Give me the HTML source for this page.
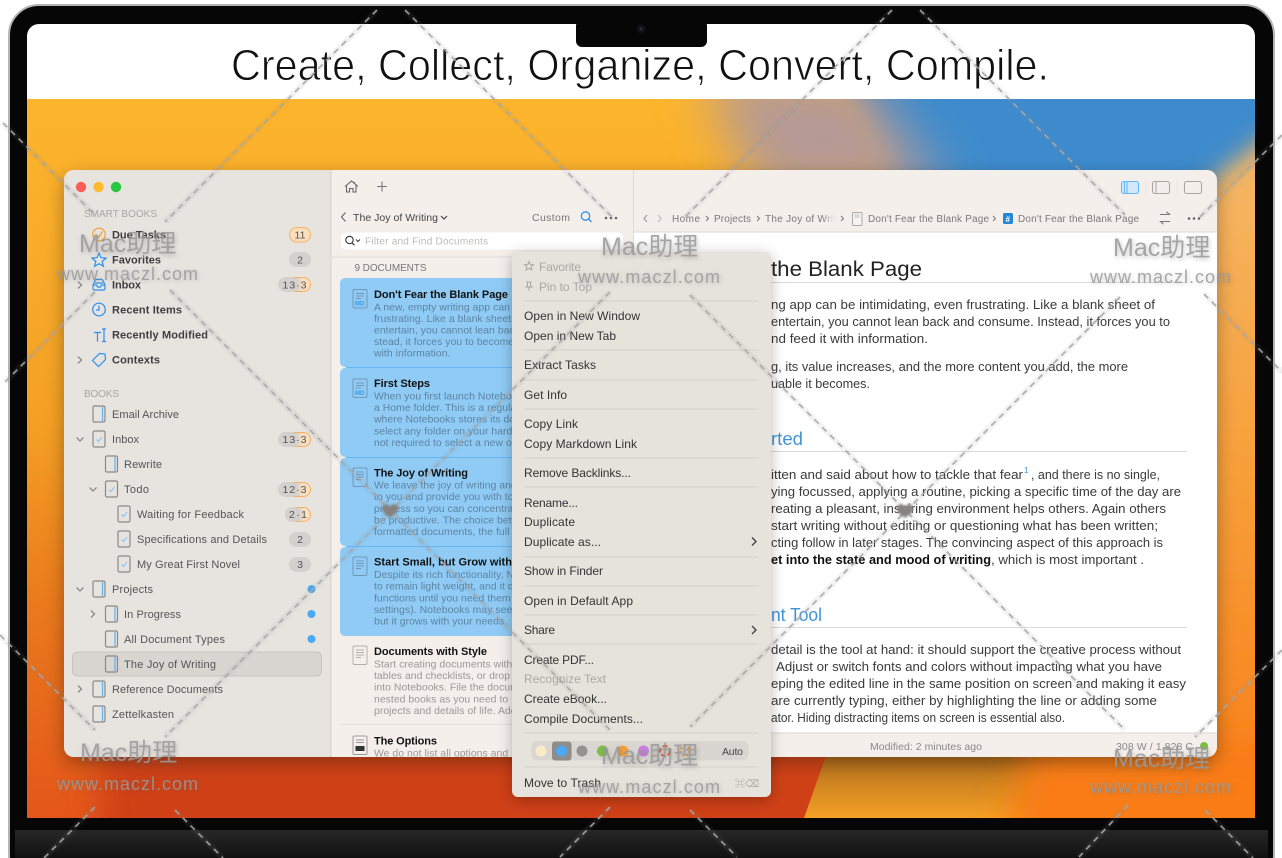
<!DOCTYPE html>
<html><head><meta charset="utf-8"><title>Notebooks</title>
<style>
html,body{margin:0;padding:0;background:#fff;width:1282px;height:858px;overflow:hidden}
svg{display:block;position:absolute;left:0;top:0}
text{font-family:"Liberation Sans","Noto Sans CJK SC",sans-serif;white-space:pre}
.sb{font-size:11px;font-weight:700;fill:#3e3e3e}
.sr{font-size:11px;fill:#555}
.sh{font-size:10px;font-weight:400;fill:#a9a6a3}
.bd{font-size:10.5px;fill:#555;text-anchor:middle}
.ct{font-size:11px;font-weight:700;fill:#111}
.cd{font-size:10.4px;fill:#5c84a3;letter-spacing:.05px}
.cg{font-size:10.4px;fill:#9a9794;letter-spacing:.05px}
.m{font-size:12px;fill:#333}
.md{font-size:12px;fill:#aaa8a5}
.bc{font-size:10px;fill:#7b7977}
.e{font-size:12.6px;fill:#3a3a3a}
.wm1{font-size:25px;fill:#9a9a9a;fill-opacity:.85;filter:drop-shadow(1px 2px 2px rgba(90,90,90,.4))}
.wm2{font-size:18px;fill:#9a9a9a;fill-opacity:.85;filter:drop-shadow(1px 1px 2px rgba(90,90,90,.35))}
.dash{fill:none;stroke:#a6a6a6;stroke-width:1.7;stroke-dasharray:6 5;stroke-opacity:.9}
.glow{fill:none;stroke:#8a8a8a;stroke-opacity:.1;stroke-width:6}
.bk{fill:none;stroke:#8b8987;stroke-width:1.2}
.bl{stroke:#62b4f4;stroke-width:1.3}
.ck{fill:none;stroke:#7cc0f5;stroke-width:1}
.ch{fill:none;stroke:#8c8a88;stroke-width:1.3}
.ic{fill:none;stroke:#2a90f0;stroke-width:1.2}
.sep{stroke:#d4d0cb;stroke-width:1}
.ln{stroke:#7397b5;stroke-width:1;fill:none}
</style></head>
<body>
<svg width="1282" height="858" viewBox="0 0 1282 858" xmlns="http://www.w3.org/2000/svg">
<defs>
<linearGradient id="base" x1="0" y1="0" x2="0" y2="1">
<stop offset="0" stop-color="#fdb52d"/><stop offset=".45" stop-color="#f4a024"/><stop offset=".7" stop-color="#ea7a1c"/><stop offset="1" stop-color="#e4561a"/>
</linearGradient>
<linearGradient id="rightg" x1="0" y1="0" x2="0" y2="1">
<stop offset="0" stop-color="#f6b868"/><stop offset=".45" stop-color="#f7a03a"/><stop offset="1" stop-color="#f97a15"/>
</linearGradient>
<linearGradient id="amb" x1="0" y1="0" x2="0" y2="1">
<stop offset="0" stop-color="#a9661d"/><stop offset=".45" stop-color="#cc821f"/><stop offset="1" stop-color="#f5a025"/>
</linearGradient>
<linearGradient id="base2" x1="0" y1="0" x2="0" y2="1">
<stop offset="0" stop-color="#272727"/><stop offset="1" stop-color="#111"/>
</linearGradient>
<linearGradient id="bdg" x1="0" y1="0" x2="1" y2="0">
<stop offset="0" stop-color="#d3d0cd"/><stop offset=".55" stop-color="#d3d0cd"/><stop offset=".75" stop-color="#f9dfc0"/><stop offset="1" stop-color="#f9dfc0"/>
</linearGradient>
<filter id="b30" x="-30%" y="-30%" width="160%" height="160%"><feGaussianBlur stdDeviation="26"/></filter>
<filter id="b10" x="-30%" y="-30%" width="160%" height="160%"><feGaussianBlur stdDeviation="12"/></filter>
<filter id="b20" x="-30%" y="-50%" width="160%" height="200%"><feGaussianBlur stdDeviation="18"/></filter>
<filter id="ws" x="-10%" y="-10%" width="120%" height="125%"><feDropShadow dx="0" dy="6" stdDeviation="9" flood-color="#000" flood-opacity=".33"/></filter>
<filter id="ms" x="-20%" y="-10%" width="140%" height="120%"><feDropShadow dx="0" dy="3" stdDeviation="7" flood-color="#000" flood-opacity=".28"/></filter>
<filter id="h" x="-50%" y="-50%" width="200%" height="200%"><feGaussianBlur stdDeviation="1.200"/></filter>
<clipPath id="scr"><path d="M27 36a12 12 0 0 1 12-12H1243a12 12 0 0 1 12 12V818H27z"/></clipPath>
<clipPath id="wp"><rect x="27" y="99" width="1228" height="719"/></clipPath>
<clipPath id="win"><rect x="64" y="170" width="1153" height="587" rx="10"/></clipPath>
<clipPath id="fade"><rect x="760" y="205" width="76" height="26"/></clipPath>
<linearGradient id="fd" x1="0" y1="0" x2="1" y2="0"><stop offset="0" stop-color="#f5efec" stop-opacity="0"/><stop offset="1" stop-color="#f5efec"/></linearGradient>
</defs>

<!-- device -->
<rect x="9" y="5" width="1265" height="880" rx="30" fill="#060606" stroke="#b4b4b4" stroke-width="2"/>
<rect x="15" y="830" width="1253" height="28" fill="url(#base2)"/>
<g clip-path="url(#scr)">
<rect x="27" y="24" width="1228" height="76" fill="#fff"/>
<g clip-path="url(#wp)">
<rect x="27" y="99" width="1228" height="719" fill="url(#base)"/>
<polygon points="1190,170 1255,130 1290,130 1290,860 1000,860 1000,500" fill="url(#rightg)" filter="url(#b10)"/>
<polygon points="830,50 1320,50 1320,95 1200,190 930,260" fill="#3e8bcd" filter="url(#b10)"/>
<polygon points="700,70 860,70 950,200 760,200" fill="#b59a94" filter="url(#b30)"/>
<polygon points="100,745 900,745 900,860 100,860" fill="#cf4016" filter="url(#b20)"/>
<polygon points="828,750 1160,750 1160,818 804,818" fill="url(#amb)"/>
<polygon points="1030,740 1300,740 1300,860 1000,860" fill="#f97c16" filter="url(#b20)"/>
</g>
</g>
<rect x="576" y="20" width="131" height="27" rx="6" fill="#060606"/>
<circle cx="641" cy="29" r="4" fill="#12161c"/><circle cx="641" cy="29" r="1" fill="#2b3a4d"/>
<text x="231" y="80" font-size="44" textLength="818" lengthAdjust="spacingAndGlyphs" fill="#111" stroke="#fff" stroke-width=".9">Create, Collect, Organize, Convert, Compile.</text>

<!-- window -->
<rect x="64" y="170" width="1153" height="587" rx="10" fill="#f5efec" filter="url(#ws)"/>
<g clip-path="url(#win)">
<rect x="64" y="170" width="267" height="587" fill="#e7e3df"/>
<line x1="331" y1="170" x2="331" y2="757" stroke="#d5d1cd"/>
<rect x="332" y="170" width="302" height="587" fill="#f5efec"/>
<line x1="633.500" y1="170" x2="633.500" y2="757" stroke="#dfd9d5"/>
<rect x="634" y="232" width="583" height="501" fill="#fff"/>
<line x1="634" y1="232" x2="1217" y2="232" stroke="#dcd8d5"/>
<line x1="634" y1="733" x2="1217" y2="733" stroke="#dcd8d5"/>
<line x1="332" y1="257" x2="633" y2="257" stroke="#e2dcd8"/>

<circle cx="81" cy="187" r="5.200" fill="#fb5f57"/><circle cx="98.500" cy="187" r="5.200" fill="#fdbc2e"/><circle cx="116" cy="187" r="5.200" fill="#28c840"/>

<!-- sidebar -->
<text class="sh" x="84" y="217" textLength="73">SMART BOOKS</text>
<text class="sb" x="112" y="238.500" textLength="54">Due Tasks</text>
<text class="sb" x="112" y="263.500" textLength="49">Favorites</text>
<text class="sb" x="112" y="288.500" textLength="29">Inbox</text>
<text class="sb" x="112" y="313.500" textLength="70">Recent Items</text>
<text class="sb" x="112" y="338.500" textLength="96">Recently Modified</text>
<text class="sb" x="112" y="363.500" textLength="48">Contexts</text>
<text class="sh" x="84" y="397" textLength="35">BOOKS</text>
<text class="sr" x="112" y="418" textLength="67">Email Archive</text>
<text class="sr" x="112" y="443" textLength="27">Inbox</text>
<text class="sr" x="124" y="468" textLength="38">Rewrite</text>
<text class="sr" x="124" y="493" textLength="25">Todo</text>
<text class="sr" x="137" y="518" textLength="107">Waiting for Feedback</text>
<text class="sr" x="137" y="543" textLength="130">Specifications and Details</text>
<text class="sr" x="137" y="568" textLength="103">My Great First Novel</text>
<text class="sr" x="112" y="593" textLength="41">Projects</text>
<text class="sr" x="124" y="618" textLength="57">In Progress</text>
<text class="sr" x="124" y="643" textLength="101">All Document Types</text>
<rect x="72.500" y="652" width="249" height="24" rx="5" fill="#d9d5d1" stroke="#c8c4c0"/>
<text class="sr" x="124" y="668" textLength="92">The Joy of Writing</text>
<text class="sr" x="112" y="693" textLength="111">Reference Documents</text>
<text class="sr" x="112" y="718" textLength="62">Zettelkasten</text>

<!-- smart icons -->
<circle cx="99" cy="234.500" r="6.300" fill="none" stroke="#f2a033" stroke-width="1.2"/><path d="M96 235l2.500 2.500 4-6" fill="none" stroke="#f2a033" stroke-width="1.200"/>
<path class="ic" d="M99 253l2 4.600 5 .5-3.800 3.300 1.200 4.900-4.400-2.600-4.400 2.600 1.200-4.900-3.800-3.300 5-.5z"/>
<path class="ic" d="M93 285v3.500a1.500 1.500 0 0 0 1.500 1.500h9a1.500 1.500 0 0 0 1.500-1.500V285l-2-4.500a2 2 0 0 0-1.500-1h-5a2 2 0 0 0-1.500 1zM93 285h3.500l1 2h3l1-2H105M95 283h8"/>
<circle class="ic" cx="99" cy="309.500" r="6.300"/><path class="ic" d="M99 305.500v4.500h-3"/>
<path class="ic" d="M94 332.500h7M97.500 332.500v9M102 329h4M102 341.500h4M104 329v12.500" stroke-width="1.300"/>
<path class="ic" d="M99.500 353.500l5.500.5.500 5.500-7 7-6-6zM102.500 356.300h.1"/>
<!-- chevrons -->
<path class="ch" d="M78 281.500l3.500 3.500-3.500 3.500M78 356.500l3.500 3.500-3.500 3.500M78 685.500l3.500 3.500-3.500 3.500M91 610.500l3.500 3.500-3.500 3.500"/>
<path class="ch" d="M76.500 437.500l3.500 3.500 3.500-3.500M89.500 487.500l3.500 3.500 3.500-3.500M76.500 587.500l3.500 3.500 3.500-3.500"/>
<!-- book icons -->
<g>
<rect class="bk" x="93" y="406" width="12" height="16" rx="1.500"/><line class="bl" x1="102.500" y1="407" x2="102.500" y2="421"/>
<rect class="bk" x="93" y="431" width="12" height="16" rx="1.500"/><path class="ck" d="M96.500 439.500l2 2 3.500-4.500"/>
<rect class="bk" x="105.500" y="456" width="12" height="16" rx="1.500"/><line class="bl" x1="115" y1="457" x2="115" y2="471"/>
<rect class="bk" x="105.500" y="481" width="12" height="16" rx="1.500"/><path class="ck" d="M109 489.500l2 2 3.500-4.500"/>
<rect class="bk" x="118" y="506" width="12" height="16" rx="1.500"/><path class="ck" d="M121.500 514.500l2 2 3.500-4.500"/>
<rect class="bk" x="118" y="531" width="12" height="16" rx="1.500"/><path class="ck" d="M121.500 539.500l2 2 3.500-4.500"/>
<rect class="bk" x="118" y="556" width="12" height="16" rx="1.500"/><path class="ck" d="M121.500 564.500l2 2 3.500-4.500"/>
<rect class="bk" x="93" y="581" width="12" height="16" rx="1.500"/><line class="bl" x1="102.500" y1="582" x2="102.500" y2="596"/>
<rect class="bk" x="105.500" y="606" width="12" height="16" rx="1.500"/><line class="bl" x1="115" y1="607" x2="115" y2="621"/>
<rect class="bk" x="105.500" y="631" width="12" height="16" rx="1.500"/><line class="bl" x1="115" y1="632" x2="115" y2="646"/>
<rect class="bk" x="105.500" y="656" width="12" height="16" rx="1.500"/><line class="bl" x1="115" y1="657" x2="115" y2="671"/>
<rect class="bk" x="93" y="681" width="12" height="16" rx="1.500"/><line class="bl" x1="102.500" y1="682" x2="102.500" y2="696"/>
<rect class="bk" x="93" y="706" width="12" height="16" rx="1.500"/><line class="bl" x1="102.500" y1="707" x2="102.500" y2="721"/>
</g>
<!-- badges -->
<rect x="289.500" y="227.500" width="21" height="14.500" rx="7.200" fill="#f9dfc0" stroke="#f5b262"/><text class="bd" x="300" y="238.500">11</text>
<rect x="289" y="252" width="22" height="15" rx="7.500" fill="#d3d0cd"/><text class="bd" x="300" y="263.500">2</text>
<rect x="278" y="277" width="33" height="15" rx="7.500" fill="url(#bdg)"/><path d="M294 277.500h9.500a7 7 0 0 1 0 14H294" fill="none" stroke="#f5b262"/><text class="bd" x="294.500" y="288.500" textLength="24">13·3</text>
<rect x="278" y="432" width="33" height="15" rx="7.500" fill="url(#bdg)"/><path d="M294 432.500h9.500a7 7 0 0 1 0 14H294" fill="none" stroke="#f5b262"/><text class="bd" x="294.500" y="443" textLength="24">13·3</text>
<rect x="278" y="482" width="33" height="15" rx="7.500" fill="url(#bdg)"/><path d="M294 482.500h9.500a7 7 0 0 1 0 14H294" fill="none" stroke="#f5b262"/><text class="bd" x="294.500" y="493" textLength="24">12·3</text>
<rect x="285" y="507" width="26" height="15" rx="7.500" fill="url(#bdg)"/><path d="M296 507.500h7.500a7 7 0 0 1 0 14H296" fill="none" stroke="#f5b262"/><text class="bd" x="298" y="518" textLength="18">2·1</text>
<rect x="289" y="532" width="22" height="15" rx="7.500" fill="#d3d0cd"/><text class="bd" x="300" y="543">2</text>
<rect x="289" y="557" width="22" height="15" rx="7.500" fill="#d3d0cd"/><text class="bd" x="300" y="568">3</text>
<circle cx="311.500" cy="589" r="4" fill="#4aaaf5"/><circle cx="311.500" cy="614" r="4" fill="#4aaaf5"/><circle cx="311.500" cy="639" r="4" fill="#4aaaf5"/>

<!-- list toolbar -->
<path d="M345 186.500l6.500-5.500 6.500 5.500M346.500 185.500v6.500h3v-3.500h3.500v3.500h3v-6.500M354.500 182v1.500" fill="none" stroke="#666" stroke-width="1.100"/>
<path d="M382 181.500v10M377 186.500h10" fill="none" stroke="#777" stroke-width="1.100"/>
<path d="M345.500 212.500l-4 4.500 4 4.500" fill="none" stroke="#666" stroke-width="1.100"/>
<text x="353" y="221" font-size="10.500" fill="#444" textLength="85">The Joy of Writing</text>
<path d="M441 216l3 3 3-3" fill="none" stroke="#444" stroke-width="1.200"/>
<text x="532" y="221" font-size="10.500" fill="#777" textLength="38">Custom</text>
<circle cx="585.500" cy="216" r="4.200" fill="none" stroke="#2a90f0" stroke-width="1.300"/><path d="M588.500 219l3 3" stroke="#2a90f0" stroke-width="1.300"/>
<circle cx="606" cy="218" r="1.300" fill="#666"/><circle cx="611" cy="218" r="1.300" fill="#666"/><circle cx="616" cy="218" r="1.300" fill="#666"/>
<rect x="341" y="232.500" width="282" height="17" rx="5" fill="#fff"/>
<circle cx="349.500" cy="240" r="3.700" fill="none" stroke="#333" stroke-width="1.100"/><path d="M352 242.800l2.500 2.500" stroke="#333" stroke-width="1.100"/><path d="M356 239.500l2 2 2-2" fill="none" stroke="#333"/>
<text x="365" y="244.500" font-size="10" fill="#bdbbb9" textLength="123">Filter and Find Documents</text>
<text x="354.500" y="271" font-size="10" fill="#777" textLength="72">9 DOCUMENTS</text>

<!-- cards -->
<rect x="340" y="278" width="200" height="89" rx="5" fill="#8fcbf5"/>
<rect x="340" y="368" width="200" height="89" rx="5" fill="#8fcbf5"/>
<rect x="340" y="458" width="200" height="88" rx="5" fill="#8fcbf5"/>
<rect x="340" y="547" width="200" height="89" rx="5" fill="#8fcbf5"/>
<line x1="346" y1="367.500" x2="540" y2="367.500" stroke="#66b6f5"/><line x1="346" y1="457.500" x2="540" y2="457.500" stroke="#66b6f5"/><line x1="346" y1="546.500" x2="540" y2="546.500" stroke="#66b6f5"/>
<line x1="340" y1="724.500" x2="540" y2="724.500" stroke="#e4dfdb"/>

<g class="ln">
<rect x="353" y="289.500" width="14" height="18.500" rx="1.500"/><path d="M356 293.500h8M356 296h8M356 298.500h5"/>
<rect x="353" y="379" width="14" height="18.500" rx="1.500"/><path d="M356 383h8M356 385.500h8M356 388h5"/>
<rect x="353" y="468" width="14" height="18.500" rx="1.500"/><path d="M356 472h8M356 474.500h8M356 477h8M356 479.500h5"/>
<rect x="353" y="557" width="14" height="18.500" rx="1.500"/><path d="M356 561h8M356 563.500h8M356 566h8M356 568.500h5"/>
<rect x="353" y="646" width="14" height="18.500" rx="1.500" stroke="#b3b0ad"/><path d="M356 650h8M356 652.500h8M356 655h8M356 657.500h5" stroke="#b3b0ad"/>
<rect x="353" y="736" width="14" height="18.500" rx="1.500" stroke="#999"/><path d="M356 740h8M356 742.500h8" stroke="#999"/>
</g>
<rect x="355.500" y="746" width="9" height="5" fill="#333"/>
<text x="355" y="305.500" font-size="6" font-weight="700" fill="#3a9cec">MD</text>
<text x="355" y="395" font-size="6" font-weight="700" fill="#3a9cec">MD</text>

<text class="ct" x="374" y="298" textLength="134">Don't Fear the Blank Page</text>
<text class="cd" x="374" y="310.500">A new, empty writing app can be intimidating</text>
<text class="cd" x="374" y="322">frustrating. Like a blank sheet of paper</text>
<text class="cd" x="374" y="333.500">entertain, you cannot lean back and consume</text>
<text class="cd" x="374" y="345">stead, it forces you to become active</text>
<text class="cd" x="374" y="356.500">with information.</text>

<text class="ct" x="374" y="387" textLength="56">First Steps</text>
<text class="cd" x="374" y="399.300">When you first launch Notebooks it creates</text>
<text class="cd" x="374" y="411">a Home folder. This is a regular folder</text>
<text class="cd" x="374" y="422.600">where Notebooks stores its documents</text>
<text class="cd" x="374" y="434.300">select any folder on your hard drive</text>
<text class="cd" x="374" y="446">not required to select a new one</text>

<text class="ct" x="374" y="476.500" textLength="94">The Joy of Writing</text>
<text class="cd" x="374" y="488.600">We leave the joy of writing and editing</text>
<text class="cd" x="374" y="500.200">to you and provide you with tools</text>
<text class="cd" x="374" y="511.800">process so you can concentrate</text>
<text class="cd" x="374" y="523.500">be productive. The choice between</text>
<text class="cd" x="374" y="535.200">formatted documents, the full</text>

<text class="ct" x="374" y="565.500" textLength="138">Start Small, but Grow with</text>
<text class="cd" x="374" y="578">Despite its rich functionality, Notebooks</text>
<text class="cd" x="374" y="589.600">to remain light weight, and it does</text>
<text class="cd" x="374" y="601.300">functions until you need them</text>
<text class="cd" x="374" y="613">settings). Notebooks may seem</text>
<text class="cd" x="374" y="624.700">but it grows with your needs.</text>

<text class="ct" x="374" y="655" textLength="113">Documents with Style</text>
<text class="cg" x="374" y="667.300">Start creating documents with</text>
<text class="cg" x="374" y="679">tables and checklists, or drop</text>
<text class="cg" x="374" y="690.600">into Notebooks. File the documents</text>
<text class="cg" x="374" y="702.300">nested books as you need to</text>
<text class="cg" x="374" y="714">projects and details of life. Add</text>

<text class="ct" x="374" y="744.500" textLength="63">The Options</text>
<text class="cg" x="374" y="756.300">We do not list all options and</text>

<!-- editor toolbar -->
<rect x="1121.500" y="181.500" width="17" height="12" rx="2" fill="#d3e9fb" stroke="#62b8f6" stroke-width="1.100"/><path d="M1124.500 182v11M1127 182v11" stroke="#62b8f6"/>
<rect x="1152.500" y="181.500" width="17" height="12" rx="2" fill="none" stroke="#aaa7a4" stroke-width="1.100"/><path d="M1156 182v11" stroke="#aaa7a4"/>
<rect x="1184.500" y="181.500" width="17" height="12" rx="2" fill="none" stroke="#aaa7a4" stroke-width="1.100"/>
<path d="M1146 180v14M1177 180v14" stroke="#ebe6e2"/>
<path d="M647 215l-3 3.500 3 3.500" fill="none" stroke="#999" stroke-width="1.100"/><path d="M658 215l3 3.500-3 3.500" fill="none" stroke="#bbb" stroke-width="1.100"/>
<text class="bc" x="672" y="222" textLength="28">Home</text>
<text class="bc" x="714" y="222" textLength="37">Projects</text>
<text class="bc" x="765" y="222" clip-path="url(#fade)" textLength="71">The Joy of Writ</text>
<rect x="822" y="210" width="14" height="16" fill="url(#fd)"/>
<path d="M706 216l2.500 2.500-2.500 2.500M757 216l2.500 2.500-2.500 2.500M841 216l2.500 2.500-2.500 2.500M993 216l2.500 2.500-2.500 2.500" fill="none" stroke="#777"/>
<rect x="852.500" y="212.500" width="9.500" height="13" rx="1" fill="#f7f3f0" stroke="#aaa"/><path d="M854.500 215h5M854.500 217h5" stroke="#aaa" stroke-width=".7"/>
<text class="bc" x="868" y="222" textLength="121">Don't Fear the Blank Page</text>
<rect x="1003" y="213" width="10" height="11" rx="1.500" fill="#2488d8"/><text x="1005.500" y="222" font-size="8" font-weight="700" fill="#fff">#</text>
<text class="bc" x="1018" y="222" textLength="121">Don't Fear the Blank Page</text>
<path d="M1160 214.500h9.500l-3-2.700M1170 221.500h-9.500l3 2.700" fill="none" stroke="#777" stroke-width="1.100"/>
<circle cx="1189" cy="218.500" r="1.300" fill="#666"/><circle cx="1194" cy="218.500" r="1.300" fill="#666"/><circle cx="1199" cy="218.500" r="1.300" fill="#666"/>

<!-- editor text -->
<text x="771" y="276" font-size="21" fill="#222" textLength="151" lengthAdjust="spacingAndGlyphs">the Blank Page</text>
<line x1="771" y1="282.500" x2="1187" y2="282.500" stroke="#dcdad8"/>
<text class="e" x="771" y="309" textLength="384" lengthAdjust="spacingAndGlyphs">ng app can be intimidating, even frustrating. Like a blank sheet of</text>
<text class="e" x="771" y="326" textLength="399" lengthAdjust="spacingAndGlyphs">entertain, you cannot lean back and consume. Instead, it forces you to</text>
<text class="e" x="771" y="343" textLength="157" lengthAdjust="spacingAndGlyphs">nd feed it with information.</text>
<text class="e" x="771" y="371" textLength="357" lengthAdjust="spacingAndGlyphs">g, its value increases, and the more content you add, the more</text>
<text class="e" x="771" y="388" textLength="99" lengthAdjust="spacingAndGlyphs">uable it becomes.</text>
<text x="771" y="445" font-size="18" fill="#3f94d6" textLength="32" lengthAdjust="spacingAndGlyphs">rted</text>
<line x1="771" y1="451.500" x2="1187" y2="451.500" stroke="#dcdad8"/>
<text class="e" x="771" y="479" textLength="252" lengthAdjust="spacingAndGlyphs">itten and said about how to tackle that fear</text>
<text x="1024" y="473" font-size="8" fill="#3f94d6">1</text>
<text class="e" x="1031" y="479" textLength="129" lengthAdjust="spacingAndGlyphs">, and there is no single,</text>
<text class="e" x="771" y="496" textLength="410" lengthAdjust="spacingAndGlyphs">ying focussed, applying a routine, picking a specific time of the day are</text>
<text class="e" x="771" y="513" textLength="395" lengthAdjust="spacingAndGlyphs">reating a pleasant, inspiring environment helps others. Again others</text>
<text class="e" x="771" y="530" textLength="387" lengthAdjust="spacingAndGlyphs">start writing without editing or questioning what has been written;</text>
<text class="e" x="771" y="547" textLength="392" lengthAdjust="spacingAndGlyphs">cting follow in later stages. The convincing aspect of this approach is</text>
<text class="e" x="771" y="564" font-weight="700" style="fill:#111" textLength="220" lengthAdjust="spacingAndGlyphs">et into the state and mood of writing</text>
<text class="e" x="991" y="564" textLength="153" lengthAdjust="spacingAndGlyphs">, which is most important .</text>
<text x="771" y="621" font-size="18" fill="#3f94d6" textLength="51" lengthAdjust="spacingAndGlyphs">nt Tool</text>
<line x1="771" y1="627.500" x2="1187" y2="627.500" stroke="#dcdad8"/>
<text class="e" x="771" y="654" textLength="410" lengthAdjust="spacingAndGlyphs">detail is the tool at hand: it should support the creative process without</text>
<text class="e" x="776" y="671" textLength="386" lengthAdjust="spacingAndGlyphs">Adjust or switch fonts and colors without impacting what you have</text>
<text class="e" x="771" y="688" textLength="415" lengthAdjust="spacingAndGlyphs">eping the edited line in the same position on screen and making it easy</text>
<text class="e" x="771" y="705" textLength="386" lengthAdjust="spacingAndGlyphs">are currently typing, either by highlighting the line or adding some</text>
<text class="e" x="771" y="722" textLength="294" lengthAdjust="spacingAndGlyphs">ator. Hiding distracting items on screen is essential also.</text>
<text x="870" y="750" font-size="10.500" fill="#888" textLength="112">Modified: 2 minutes ago</text>
<text x="1116" y="750" font-size="10.500" fill="#888" textLength="77">308 W / 1,828 C</text>
<circle cx="1204" cy="746" r="4" fill="#7cc043"/>
</g>

<!-- context menu -->
<rect x="512" y="252" width="259" height="545" rx="6" fill="#e6e2dc" filter="url(#ms)"/>
<path d="M529 261.500l1.300 3 3.200.3-2.400 2.100.7 3.100-2.800-1.700-2.800 1.700.7-3.100-2.400-2.100 3.200-.3z" fill="none" stroke="#aaa8a5"/>
<path d="M526.500 282h5M527.500 282v3.500l-1.500 1.500h6l-1.500-1.500V282M529 287v4" fill="none" stroke="#aaa8a5"/>
<text class="md" x="539" y="271" textLength="42">Favorite</text>
<text class="md" x="539" y="291" textLength="53">Pin to Top</text>
<line class="sep" x1="524" y1="301" x2="758" y2="301"/>
<text class="m" x="524" y="320" textLength="116">Open in New Window</text>
<text class="m" x="524" y="340" textLength="92">Open in New Tab</text>
<line class="sep" x1="524" y1="350" x2="758" y2="350"/>
<text class="m" x="524" y="369" textLength="72">Extract Tasks</text>
<line class="sep" x1="524" y1="380" x2="758" y2="380"/>
<text class="m" x="524" y="399" textLength="43">Get Info</text>
<line class="sep" x1="524" y1="409" x2="758" y2="409"/>
<text class="m" x="524" y="428" textLength="54">Copy Link</text>
<text class="m" x="524" y="448" textLength="113">Copy Markdown Link</text>
<line class="sep" x1="524" y1="458" x2="758" y2="458"/>
<text class="m" x="524" y="477" textLength="107">Remove Backlinks...</text>
<line class="sep" x1="524" y1="487" x2="758" y2="487"/>
<text class="m" x="524" y="507" textLength="54">Rename...</text>
<text class="m" x="524" y="526" textLength="51">Duplicate</text>
<text class="m" x="524" y="546" textLength="77">Duplicate as...</text>
<path d="M752 537.500l4 4-4 4M752 626l4 4-4 4" fill="none" stroke="#444" stroke-width="1.400"/>
<line class="sep" x1="524" y1="557" x2="758" y2="557"/>
<text class="m" x="524" y="575" textLength="79">Show in Finder</text>
<line class="sep" x1="524" y1="586" x2="758" y2="586"/>
<text class="m" x="524" y="605" textLength="109">Open in Default App</text>
<line class="sep" x1="524" y1="615" x2="758" y2="615"/>
<text class="m" x="524" y="634" textLength="31">Share</text>
<line class="sep" x1="524" y1="644" x2="758" y2="644"/>
<text class="m" x="524" y="664" textLength="70">Create PDF...</text>
<text class="md" x="524" y="683" textLength="82">Recognize Text</text>
<text class="m" x="524" y="703" textLength="83">Create eBook...</text>
<text class="m" x="524" y="723" textLength="119">Compile Documents...</text>
<line class="sep" x1="524" y1="733" x2="758" y2="733"/>
<rect x="531.500" y="741" width="217" height="19.500" rx="6" fill="#d9d5d0"/>
<rect x="552" y="741.500" width="19.500" height="19" rx="3" fill="#8f8c89"/>
<circle cx="541" cy="751" r="5.500" fill="#f8ecc8"/><circle cx="561.500" cy="751" r="5.500" fill="#4aa9f5"/><circle cx="582" cy="751" r="5.500" fill="#95928f"/>
<circle cx="602.500" cy="751" r="5.500" fill="#7cc043"/><circle cx="623" cy="751" r="5.500" fill="#f5a03c"/><circle cx="643.500" cy="751" r="5.500" fill="#c77fe0"/>
<circle cx="665" cy="751" r="5" fill="none" stroke="#e5583c" stroke-width="2" stroke-dasharray="5 2"/>
<circle cx="685" cy="751" r="4.500" fill="none" stroke="#eda040" stroke-width="2.500" stroke-dasharray="2 2"/>
<text x="722" y="755" font-size="10.500" fill="#444" textLength="21">Auto</text>
<line class="sep" x1="524" y1="767" x2="758" y2="767"/>
<text class="m" x="524" y="787" textLength="77">Move to Trash</text>
<text x="735" y="787" font-size="10" fill="#aaa8a5">⌘⌫</text>

<!-- watermark lattice -->
<g class="glow">
<path d="M377 10L165 222M95 292L5 382M892 10L685 217M610 292L165 737M95 807L44 858M1282 135L1200 217M1120 297L690 727M610 807L560 857M1282 650L1195 737M1128 805L1079 857M3 123L95 215M170 290L610 730M690 810L737 857M405 10L612 217M690 295L1125 730M1205 810L1253 858M920 10L1125 215M1204 294L1282 372M0 635L95 730M175 810L223 858"/>
</g>
<g class="dash">
<path d="M377 10L165 222M95 292L5 382M892 10L685 217M610 292L165 737M95 807L44 858M1282 135L1200 217M1120 297L690 727M610 807L560 857M1282 650L1195 737M1128 805L1079 857M3 123L95 215M170 290L610 730M690 810L737 857M405 10L612 217M690 295L1125 730M1205 810L1253 858M920 10L1125 215M1204 294L1282 372M0 635L95 730M175 810L223 858"/>
</g>
<path d="M390 518c-5-3.500-8-6-8-9a4 4 0 0 1 8-1.500a4 4 0 0 1 8 1.500c0 3-3 5.500-8 9z" fill="#85827f" filter="url(#h)"/>
<path d="M905 518c-5-3.500-8-6-8-9a4 4 0 0 1 8-1.500a4 4 0 0 1 8 1.500c0 3-3 5.500-8 9z" fill="#85827f" filter="url(#h)"/>

<text class="wm1" x="79" y="252">Mac助理</text>
<text class="wm2" x="57" y="280" textLength="141">www.maczl.com</text>
<text class="wm1" x="601" y="255">Mac助理</text>
<text class="wm2" x="578" y="283" textLength="142">www.maczl.com</text>
<text class="wm1" x="1113" y="256">Mac助理</text>
<text class="wm2" x="1090" y="283" textLength="141">www.maczl.com</text>
<text class="wm1" x="80" y="761">Mac助理</text>
<text class="wm2" x="57" y="790" textLength="141">www.maczl.com</text>
<text class="wm1" x="601" y="764">Mac助理</text>
<text class="wm2" x="578" y="793" textLength="142">www.maczl.com</text>
<text class="wm1" x="1113" y="767">Mac助理</text>
<text class="wm2" x="1090" y="793" textLength="141">www.maczl.com</text>
</svg>
</body></html>
